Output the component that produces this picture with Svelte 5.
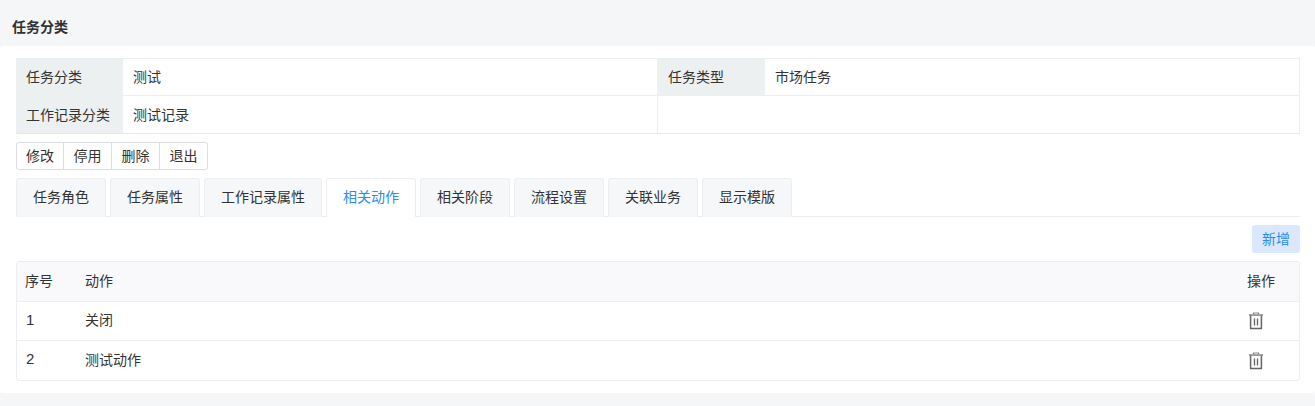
<script>
  // detail fields, two per row
  const fields = [
    ["任务分类", "测试", "任务类型", "市场任务"],
    ["工作记录分类", "测试记录", "", ""],
  ];
  const actions = ["修改", "停用", "删除", "退出"];
  const tabs = ["任务角色", "任务属性", "工作记录属性", "相关动作", "相关阶段", "流程设置", "关联业务", "显示模版"];
  const activeTab = "相关动作";
  const rows = [
    { id: 1, name: "关闭" },
    { id: 2, name: "测试动作" },
  ];
</script>

<div class="page">
  <div class="title">任务分类</div>
  <div class="card">
    <div class="detail">
      {#each fields as f}
        <div class="detail-row">
          <div class="label">{f[0]}</div>
          <div class="value">{f[1]}</div>
          {#if f[2]}
            <div class="label second">{f[2]}</div>
            <div class="value last">{f[3]}</div>
          {:else}
            <div class="value blank"></div>
          {/if}
        </div>
      {/each}
    </div>

    <div class="btn-group">
      {#each actions as a}
        <button>{a}</button>
      {/each}
    </div>

    <div class="tabs">
      {#each tabs as t}
        <div class="tab" class:active={t == activeTab}>{t}</div>
      {/each}
    </div>

    <div class="toolbar">
      <button class="add">新增</button>
    </div>

    <div class="list">
      <div class="list-row head">
        <div class="c-id">序号</div>
        <div class="c-name">动作</div>
        <div class="c-op">操作</div>
      </div>
      {#each rows as r}
        <div class="list-row">
          <div class="c-id"><span class="num">{r.id}</span></div>
          <div class="c-name">{r.name}</div>
          <div class="c-op">
            <svg width="16" height="18" viewBox="0 0 16 18" fill="none">
              <path d="M5.5 2.5V1h5v1.5" stroke="#8c8c8c" stroke-width="1.2" />
              <path d="M1 3h14" stroke="#8c8c8c" stroke-width="1.6" />
              <path d="M2.6 3.5V16.6h10.8V3.5" stroke="#666" stroke-width="1.5" />
              <path d="M6.5 6.5v7M9.5 6.5v7" stroke="#666" stroke-width="1.3" />
            </svg>
          </div>
        </div>
      {/each}
    </div>
  </div>
</div>

<style>
  :global(body) {
    background: #f5f6f8;
  }

  .page {
    font-family: "Liberation Sans", "Noto Sans CJK SC", sans-serif;
    font-size: 14px;
    color: #333;
    height: 406px;
    overflow: hidden;
  }

  .title {
    height: 46px;
    padding: 17px 12px 0;
    box-sizing: border-box;
    line-height: 20px;
    font-size: 14px;
    font-weight: 700;
    color: #303133;
  }

  .card {
    background: #fff;
    border-radius: 3px;
    padding: 12px 15px 12px 16px;
    height: 347px;
    box-sizing: border-box;
  }

  .detail {
    border: 1px solid #edeef2;
    border-bottom-color: #e6e8ee;
  }

  .detail-row {
    display: flex;
    height: 36px;
    box-sizing: border-box;
  }

  .detail-row + .detail-row {
    height: 38px;
    border-top: 1px solid #edeef2;
  }

  .detail-row + .detail-row > div {
    padding-top: 2px;
    line-height: 35px;
  }

  .label {
    width: 106px;
    flex: none;
    background: #ecf0f1;
    padding-left: 9px;
    box-sizing: border-box;
    line-height: 37px;
  }

  .label.second {
    width: 107px;
    padding-left: 10px;
  }

  .value {
    width: 535px;
    flex: none;
    padding-left: 10px;
    box-sizing: border-box;
    line-height: 37px;
    border-right: 1px solid #edeef2;
  }

  .value.last,
  .value.blank {
    flex: 1;
    width: auto;
    border-right: none;
  }

  .btn-group {
    display: flex;
    margin-top: 8px;
    width: 192px;
    height: 28px;
    box-sizing: border-box;
    border: 1px solid #dcdee6;
    border-radius: 3px;
  }

  .btn-group button {
    width: 48px;
    background: none;
    border: none;
    border-left: 1px solid #dcdee6;
    padding: 0 0 2px;
    font: inherit;
    color: #333;
  }

  .btn-group button:first-child {
    width: 46px;
    border-left: none;
  }

  .tabs {
    display: flex;
    gap: 4px;
    margin-top: 8px;
    height: 39px;
    box-sizing: border-box;
    border-bottom: 1px solid #edeef2;
  }

  .tab {
    padding: 0 16px;
    height: 39px;
    box-sizing: border-box;
    line-height: 37px;
    background: #f6f7f9;
    border: 1px solid #edeef2;
    border-bottom: none;
    border-radius: 3px 3px 0 0;
  }

  .tab.active {
    background: #fff;
    color: #2d8cf0;
  }

  .toolbar {
    display: flex;
    justify-content: flex-end;
    margin-top: 8px;
  }

  .add {
    width: 48px;
    height: 28px;
    padding: 0 0 2px;
    border: none;
    border-radius: 3px;
    background: #d9e8fd;
    color: #2d8cf0;
    font: inherit;
  }

  .list {
    margin-top: 8px;
    border: 1px solid #edeef2;
    border-radius: 3px;
  }

  .list-row {
    display: flex;
    align-items: center;
    height: 39px;
    box-sizing: border-box;
    border-top: 1px solid #edeef2;
  }

  .list-row:last-child {
    height: 40px;
  }

  .list-row.head {
    border-top: none;
    background: #f9f9fb;
  }

  .c-id {
    width: 60px;
    padding-left: 8px;
    box-sizing: border-box;
    flex: none;
    margin-bottom: 4px;
  }

  .num {
    margin-left: 1px;
    font-size: 15px;
  }

  .c-name {
    flex: 1;
    padding-left: 8px;
    margin-bottom: 4px;
  }

  .c-op {
    width: 52px;
    flex: none;
    display: flex;
  }

  .head .c-op {
    margin-bottom: 4px;
  }

  .c-op svg {
    margin-left: 1px;
  }
</style>
